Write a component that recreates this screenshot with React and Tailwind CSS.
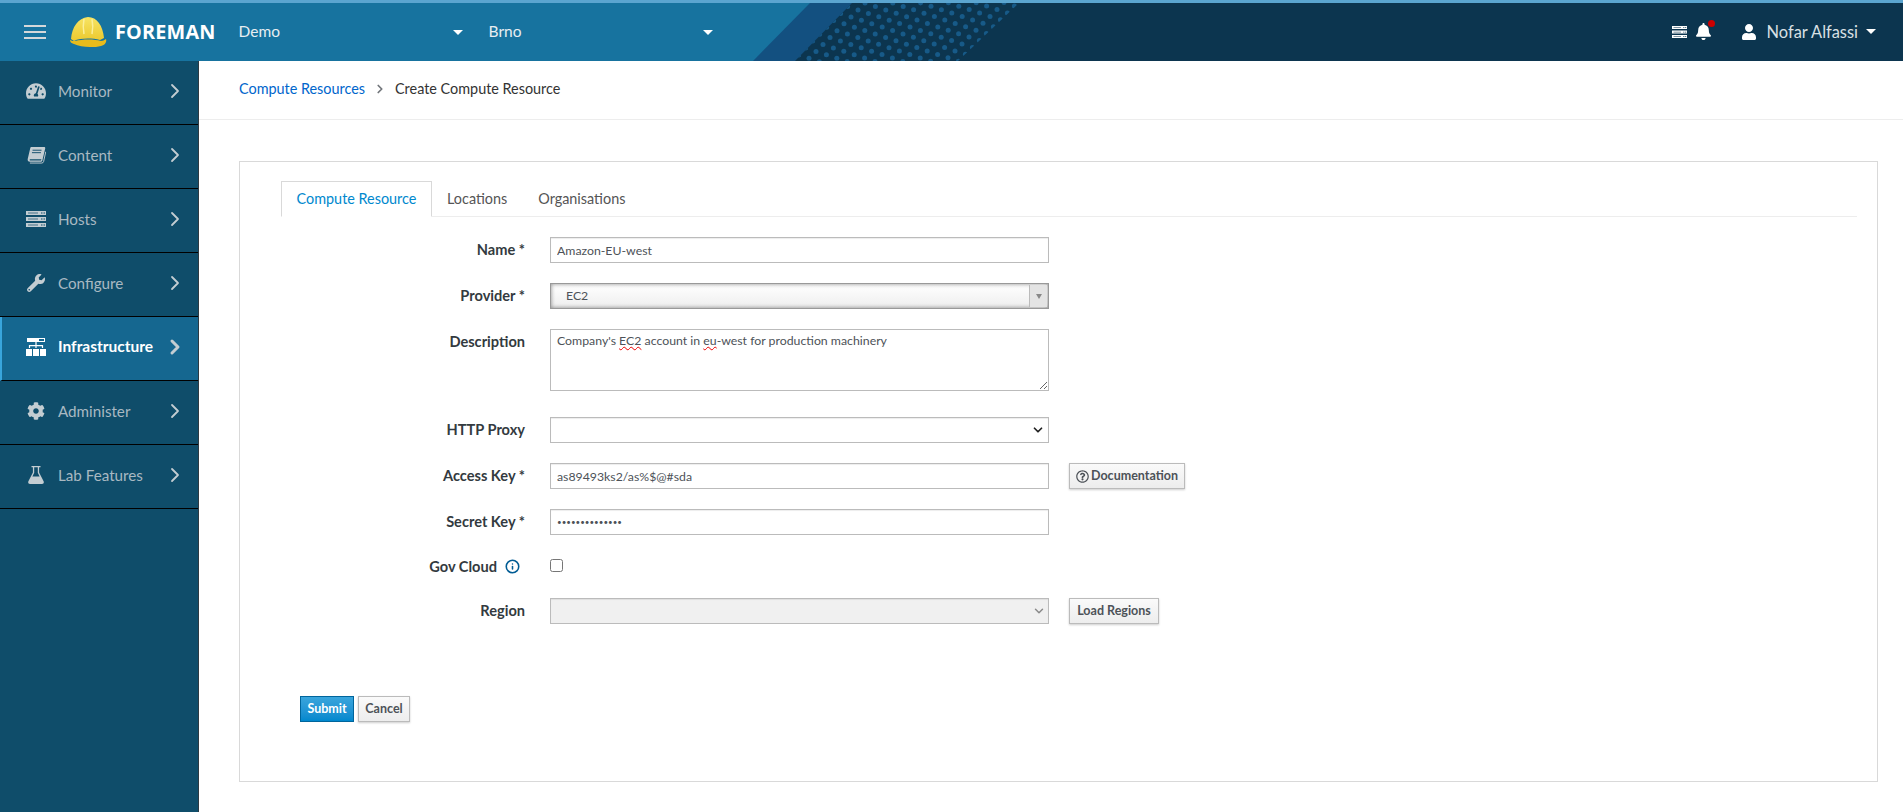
import { ChevronRight, ChevronDown, Info } from "lucide-react";
import { FaBell, FaCog, FaRegQuestionCircle, FaTachometerAlt, FaUser, FaWrench } from "react-icons/fa";

function BookIcon({ className }) {
  return (
    <svg viewBox="0 0 20 18" fill="currentColor" className={className}>
      <path d="M5 0h13c1 0 1.5.7 1.2 1.6l-3 12.6c-.3 1-.9 1.5-1.9 1.5H3c-1.800 0-2.700-1.300-2.300-3L3.300 1.500C3.500.5 4 0 5 0z" />
      <path d="M3.200 13h12l-.4 1.300H3.100c-.5 0-.5-1.300.1-1.300z" fill="#0f4d6a" />
      <path d="M5.800 3.400h9.500M5.200 6h9.500" stroke="#0f4d6a" strokeWidth="1" />
      <path d="M3 17h12.500c1 0 1.700-.5 2-1.500L19.800 5" stroke="currentColor" strokeWidth="1" fill="none" />
    </svg>
  );
}

function ServerIcon({ className, gap = "#0f4d6a" }) {
  return (
    <svg viewBox="0 0 20 16" className={className}>
      <path d="M0 0h20v4H0zM0 6h20v4H0zM0 12h20v4H0z" fill="currentColor" />
      <path d="M2 1.500h10v1H2zM2 7.500h10v1H2zM2 13.500h10v1H2z" fill={gap} opacity="0.7" />
      <path d="M15 1.500h1.500v1H15zM17.500 1.500H19v1h-1.500zM15 7.500h1.500v1H15zM17.500 7.500H19v1h-1.500zM15 13.500h1.500v1H15zM17.500 13.500H19v1h-1.500z" fill={gap} />
    </svg>
  );
}

function NetworkIcon({ className }) {
  return (
    <svg viewBox="0 0 20 18" className={className} fill="currentColor">
      <path d="M1 0h18v4H1z" />
      <path d="M13 1h5v2h-5z" fill="#156790" />
      <path d="M9.400 4h1.200v3h6.500v3h-1.200V8.200h-5.300V10H9.400V8.200H4.100V10H2.900V7h6.500z" />
      <path d="M0 11h6v7H0zM7 11h6v7H7zM14 11h6v7h-6z" />
    </svg>
  );
}

function FlaskIcon({ className }) {
  return (
    <svg viewBox="0 0 16 18" className={className} fill="currentColor">
      <path d="M3.500 0h9v1.300h-1.400v5.200l4.500 8.800c.6 1.300-.1 2.700-1.600 2.700H2c-1.500 0-2.200-1.400-1.600-2.700l4.500-8.800V1.300H3.500z" />
      <path d="M6.200 1.300h3.600v5.500l1.800 3.700H4.400l1.800-3.700z" fill="#0f4d6a" />
    </svg>
  );
}

const navItems = [
  { label: "Monitor", icon: FaTachometerAlt, iconClass: "w-[20px] h-[20px]" },
  { label: "Content", icon: BookIcon, iconClass: "w-[19px] h-[17px]" },
  { label: "Hosts", icon: ServerIcon, iconClass: "w-[20px] h-[16px]" },
  { label: "Configure", icon: FaWrench, iconClass: "w-[18px] h-[18px]" },
  { label: "Infrastructure", icon: NetworkIcon, iconClass: "w-[20px] h-[18px]", active: true },
  { label: "Administer", icon: FaCog, iconClass: "w-[18px] h-[18px]" },
  { label: "Lab Features", icon: FlaskIcon, iconClass: "w-[16px] h-[18px]" },
];

// dot lattice of the banner, clipped to the slanted band
const bannerDots = [];
for (let i = -30; i < 40; i++) {
  for (let j = -10; j < 20; j++) {
    bannerDots.push([858 + i * 10.4 - j * 7, 7 + i * 3.4 + j * 6.9]);
  }
}

function HeaderArt() {
  return (
    <svg className="absolute inset-0 w-full h-full" viewBox="0 0 1903 58" preserveAspectRatio="none">
      <defs>
        <clipPath id="dotband">
          <polygon points="852,0 1019,0 958,58 795,58" />
        </clipPath>
      </defs>
      <polygon points="810,0 1903,0 1903,58 753,58" fill="#135080" />
      <polygon points="852,0 1903,0 1903,58 795,58" fill="#0c354f" />
      <g clipPath="url(#dotband)" fill="#175a88">
        {bannerDots.map(([x, y], i) => (
          <circle key={i} cx={x} cy={y} r="2.5" />
        ))}
      </g>
    </svg>
  );
}

function Helmet() {
  return (
    <svg width="38" height="32" viewBox="0 0 38 32" className="shrink-0">
      <defs>
        <linearGradient id="shell" x1="0" y1="0" x2="0" y2="1">
          <stop offset="0" stopColor="#f7e463" />
          <stop offset="1" stopColor="#ecc92e" />
        </linearGradient>
      </defs>
      <path d="M2 23C3 11 9 2 19 1c9 0 15 9 16 21l-4 2c-8-2-20-2-26 1z" fill="url(#shell)" />
      <path d="M1 24c2 1 3 1 5 1 8-2 19-2 26 0 2 0 3-1 5-2 1 3-1 6-5 7-3 1-7 1-11 1-6 0-12-1-16-3-3-1-4-2-4-4z" fill="#e8bb1c" />
      <path d="M15 3c-1 5-1 10 0 15M23 3c1 5 1 10 0 15" stroke="#fbef9a" strokeWidth="1.5" fill="none" />
    </svg>
  );
}

function ScopeSelect({ label, className }) {
  return (
    <div className={`flex items-center justify-between text-[15.5px] text-[#e8eef2] ${className}`}>
      <span>{label}</span>
      <span className="w-0 h-0 border-x-[5px] border-x-transparent border-t-[5px] border-t-white" />
    </div>
  );
}

function Sidebar() {
  return (
    <aside className="w-[199px] shrink-0 bg-[#0f4d6a] border-r border-r-[#2d3a42]">
      {navItems.map(({ label, icon: Icon, iconClass, active }) => (
        <div
          key={label}
          className={`h-[64px] flex items-center border-b border-b-black pb-[3px] pr-[11px] ${
            active
              ? "bg-[#156790] text-white text-[15.5px] font-bold border-l-2 border-l-[#39a5dc] pl-[24px]"
              : "text-[#a9b9c2] text-[15.2px] pl-[26px]"
          }`}
        >
          <span className="w-[20px] flex justify-center shrink-0">
            <Icon className={`${iconClass} ${active ? "text-white" : "text-[#c3cdd2]"}`} />
          </span>
          <span className="ml-[12px] flex-1">{label}</span>
          <ChevronRight className="w-6 h-6 text-[#c3cdd2]" strokeWidth={active ? 3 : 1.8} />
        </div>
      ))}
    </aside>
  );
}

function Row({ label, children, extra, className = "items-center" }) {
  return (
    <div className={`flex ${className}`}>
      <div className="w-[244px] shrink-0 text-right text-[14.6px] font-bold text-[#333a40]">{label}</div>
      <div className="ml-[25px] w-[499px] shrink-0">{children}</div>
      {extra}
    </div>
  );
}

const fieldClass =
  "block w-full h-[26px] border border-[#bbb] shadow-[inset_0_1px_1px_rgba(3,3,3,0.075)] px-[6px] text-[12.3px] text-[#4d5258] bg-white outline-none";

function GreyButton({ children, className = "" }) {
  return (
    <button className={`h-[26px] pt-[1px] flex items-center border border-[#bbb] bg-gradient-to-b from-[#fafafa] to-[#ededed] shadow-[0_1px_2px_rgba(3,3,3,0.2)] text-[12.5px] font-bold text-[#4d5258] ${className}`}>
      {children}
    </button>
  );
}

export default function App() {
  return (
    <div className="h-[812px] flex flex-col overflow-hidden bg-white font-['Lato','Liberation_Sans',sans-serif]">
      {/* Top bar */}
      <header className="relative h-[61px] shrink-0 border-t-[3px] border-t-[#5ba5d0] bg-[#17739f]">
        <HeaderArt />
        <div className="relative h-full flex items-center">
          <div className="ml-[24px] w-[22px] flex flex-col gap-[4px] shrink-0">
            <span className="h-[2px] bg-[#d4d8da]" />
            <span className="h-[2px] bg-[#d4d8da]" />
            <span className="h-[2px] bg-[#d4d8da]" />
          </div>
          <div className="ml-[23px]"><Helmet /></div>
          <span className="ml-[8px] text-[19.8px] font-bold text-white font-['Open_Sans',sans-serif] tracking-[0.2px]">FOREMAN</span>
          <ScopeSelect label="Demo" className="ml-[23px] w-[224px]" />
          <ScopeSelect label="Brno" className="ml-[26px] w-[224px]" />
          <div className="ml-auto flex items-center text-white">
            <ServerIcon className="w-[15px] h-[12px] text-white" gap="#0c354f" />
            <div className="relative ml-[8px]">
              <FaBell className="w-[17px] h-[17px]" />
              <span className="absolute -top-[3px] -right-[3px] w-[7px] h-[7px] rounded-full bg-[#cc0000]" />
            </div>
            <FaUser className="ml-[29px] w-[16px] h-[16px]" />
            <span className="ml-[10px] text-[16.4px] text-[#d9e0e4]">Nofar Alfassi</span>
            <span className="ml-[8px] mr-[27px] w-0 h-0 border-x-[5px] border-x-transparent border-t-[5px] border-t-white" />
          </div>
        </div>
      </header>

      <div className="flex flex-1 min-h-0">
        <Sidebar />
        <main className="flex-1 min-w-0">
          {/* Breadcrumb */}
          <div className="h-[59px] flex items-center border-b border-b-[#ededed] pl-[40px] pb-[2px] text-[14.4px]">
            <span className="text-[#0066cc]">Compute Resources</span>
            <ChevronRight className="mx-[8px] w-[14px] h-[14px] text-[#72767b]" strokeWidth={3} />
            <span className="text-[#333]">Create Compute Resource</span>
          </div>

          {/* Card */}
          <div className="mt-[41px] ml-[40px] mr-[25px] h-[621px] border border-[#d9d9d9] pt-[19px] pl-[41px] pr-[20px]">
            <div className="flex h-[36px] border-b border-b-[#ededed] text-[14.4px]">
              <div className="-mb-px h-[36px] w-[151px] flex items-center justify-center border border-[#d9d9d9] border-b-white bg-white text-[#0088ce]">
                Compute Resource
              </div>
              <div className="ml-[15px] flex items-center text-[#555]">Locations</div>
              <div className="ml-[31px] flex items-center text-[#555]">Organisations</div>
            </div>

            <div className="mt-[20px] flex flex-col">
              <Row label="Name *">
                <input className={fieldClass} defaultValue="Amazon-EU-west" />
              </Row>
              <Row label="Provider *" className="items-center mt-[20px]">
                <div className="flex h-[26px] items-stretch border border-[#999] bg-gradient-to-b from-white to-[#eee] shadow-[inset_0_0_4px_rgba(0,0,0,0.45)] text-[12.3px] text-[#4d5258]">
                  <span className="flex-1 flex items-center pl-[15px]">EC2</span>
                  <span className="w-[18px] m-[1px] border-l border-l-[#bbb] bg-[#e4e4e4] flex items-center justify-center">
                    <span className="w-0 h-0 border-x-[3px] border-x-transparent border-t-[5px] border-t-[#888]" />
                  </span>
                </div>
              </Row>
              <Row label={<span className="block pt-[2px]">Description</span>} className="items-start mt-[20px]">
                <div className="h-[62px] border border-[#bbb] px-[6px] pt-[2px] text-[12.3px] text-[#4d5258] resize-y overflow-auto">
                  Company's <span className="underline decoration-wavy decoration-[#e00] decoration-1">EC2</span> account in{" "}
                  <span className="underline decoration-wavy decoration-[#e00] decoration-1">eu</span>-west for production machinery
                </div>
              </Row>
              <Row label="HTTP Proxy" className="items-center mt-[26px]">
                <div className={`${fieldClass} flex items-center justify-end pr-[3px]`}>
                  <ChevronDown className="w-[14px] h-[14px] text-[#222]" strokeWidth={3} />
                </div>
              </Row>
              <Row
                label="Access Key *"
                className="items-center mt-[20px]"
                extra={
                  <GreyButton className="ml-[20px] w-[116px] justify-center gap-[2px]">
                    <FaRegQuestionCircle className="w-[13px] h-[13px]" />
                    Documentation
                  </GreyButton>
                }
              >
                <input className={fieldClass} defaultValue="as89493ks2/as%$@#sda" />
              </Row>
              <Row label="Secret Key *" className="items-center mt-[20px]">
                <input type="password" className={`${fieldClass} !text-[8px]`} defaultValue="as89493ks2sdaf" />
              </Row>
              <Row
                label={
                  <span className="inline-flex items-center pr-[5px]">
                    Gov Cloud
                    <Info className="ml-[8px] w-[15px] h-[15px] text-[#005c94]" strokeWidth={2.5} />
                  </span>
                }
                className="items-center mt-[20px] h-[23px]"
              >
                <input type="checkbox" className="block w-[13px] h-[13px] -mt-[2px]" />
              </Row>
              <Row
                label="Region"
                className="items-center mt-[20px]"
                extra={<GreyButton className="ml-[20px] w-[90px] justify-center">Load Regions</GreyButton>}
              >
                <div className={`${fieldClass} flex items-center justify-end pr-[2px] !bg-[#f0f0f0]`}>
                  <ChevronDown className="w-[14px] h-[14px] text-[#8a8a8a]" strokeWidth={2.5} />
                </div>
              </Row>
            </div>

            <div className="mt-[72px] ml-[19px] flex gap-[4px] text-[12.5px] font-bold">
              <button className="h-[26px] w-[54px] border border-[#00659c] bg-gradient-to-b from-[#39a5dc] to-[#0088ce] text-white">Submit</button>
              <GreyButton className="w-[52px] justify-center">Cancel</GreyButton>
            </div>
          </div>
        </main>
      </div>
    </div>
  );
}
